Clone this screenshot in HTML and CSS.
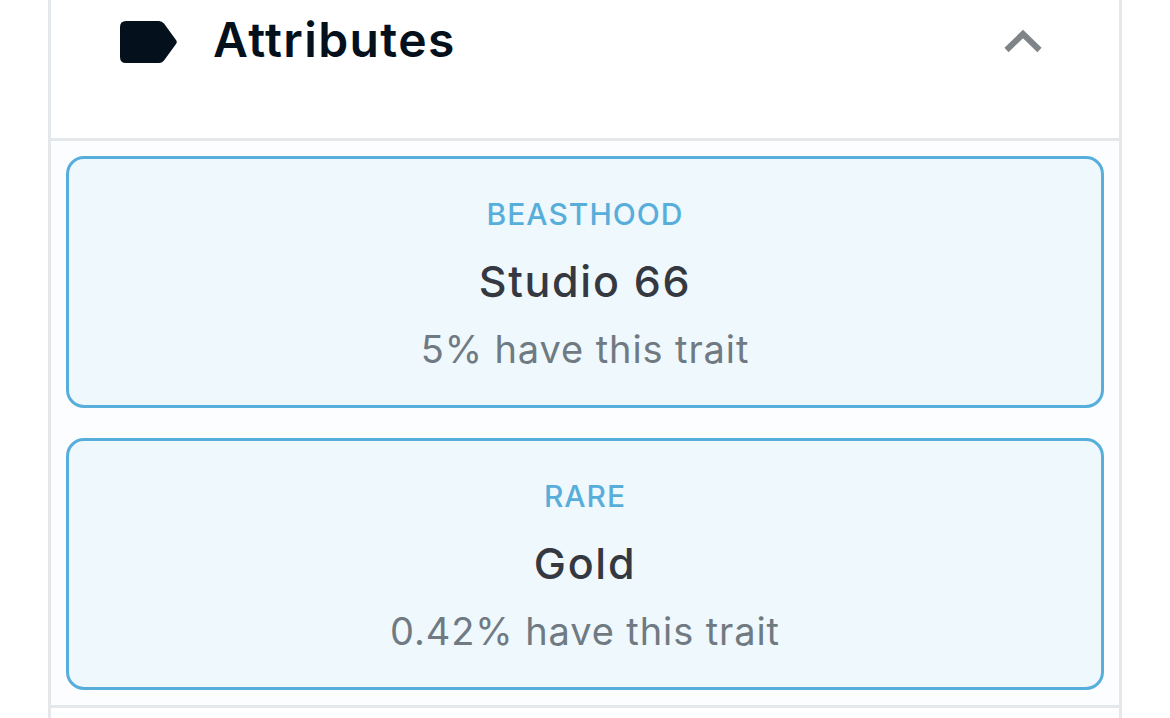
FILE: index.html
```html
<!DOCTYPE html>
<html lang="en">
<head>
    <meta charset="utf-8" />
    <title>Attributes</title>
    <link rel="stylesheet" href="styles.css">
</head>
<body>
    <section class="panel">
        <header class="panel__head">
            <svg class="panel__icon" width="57" height="42" viewBox="0 0 57 42">
                <path d="M6 0H39Q42 0 44 2.600L56 19Q57.500 21 56 23L44 39.400Q42 42 39 42H6Q0 42 0 36V6Q0 0 6 0Z" fill="#04111d" />
            </svg>
            <h2 class="panel__title">Attributes</h2>
            <svg class="panel__toggle" width="38" height="24" viewBox="0 0 38 24">
                <path d="M2.500 21L19 5L35.500 21" fill="none" stroke="#7f8489" stroke-width="6" />
            </svg>
        </header>
        <div class="panel__body">
            <div class="trait">
                <div class="trait__type">BEASTHOOD</div>
                <div class="trait__value">Studio 66</div>
                <div class="trait__rarity">5% have this trait</div>
            </div>
            <div class="trait">
                <div class="trait__type">RARE</div>
                <div class="trait__value">Gold</div>
                <div class="trait__rarity">0.42% have this trait</div>
            </div>
        </div>
    </section>
</body>
</html>
```

FILE: styles.css
```css
* {
    box-sizing: border-box; margin: 0; padding: 0;
}
html, body {
    height: 100%;
}
body {
    background: #fff;
    font-family: "Inter", "Open Sans", sans-serif;
    overflow: hidden;
}
.panel {
    height: 100%;
    margin: 0 48px;
    border-left: 3px solid #e5e8eb;
    border-right: 3px solid #e5e8eb;
}
.panel__head {
    height: 141px;
    display: flex;
    align-items: flex-start;
    padding: 21px 77px 0 69px;
    border-bottom: 3px solid #e5e8eb;
    background: #fff;
}
.panel__icon {
    flex: none;
}
.panel__title {
    flex: 1;
    margin: -5px 0 0 36px;
    font-size: 48px;
    line-height: 48px;
    font-weight: 600;
    letter-spacing: 1.4px;
    color: #04111d;
}
.panel__toggle {
    flex: none;
    margin-top: 8px;
}
.panel__body {
    display: flex;
    flex-direction: column;
    gap: 30px;
    padding: 15px;
    border-bottom: 3px solid #e5e8eb;
    background: #fbfdfe;
}
.trait {
    height: 252px;
    display: flex;
    flex-direction: column;
    align-items: center;
    padding-top: 33px;
    border: 3px solid #58aedb;
    border-radius: 18px;
    background: #eff8fd;
}
.trait__type {
    font-size: 30px;
    line-height: 44px;
    font-weight: 500;
    letter-spacing: 1px;
    color: #58aedb;
}
.trait__value {
    margin-top: 23px;
    font-size: 43px;
    line-height: 44px;
    font-weight: 500;
    letter-spacing: 1.7px;
    color: #353840;
}
.trait__rarity {
    margin-top: 24px;
    font-size: 38px;
    line-height: 44px;
    font-weight: 400;
    letter-spacing: 0.9px;
    color: #707a83;
}
```
